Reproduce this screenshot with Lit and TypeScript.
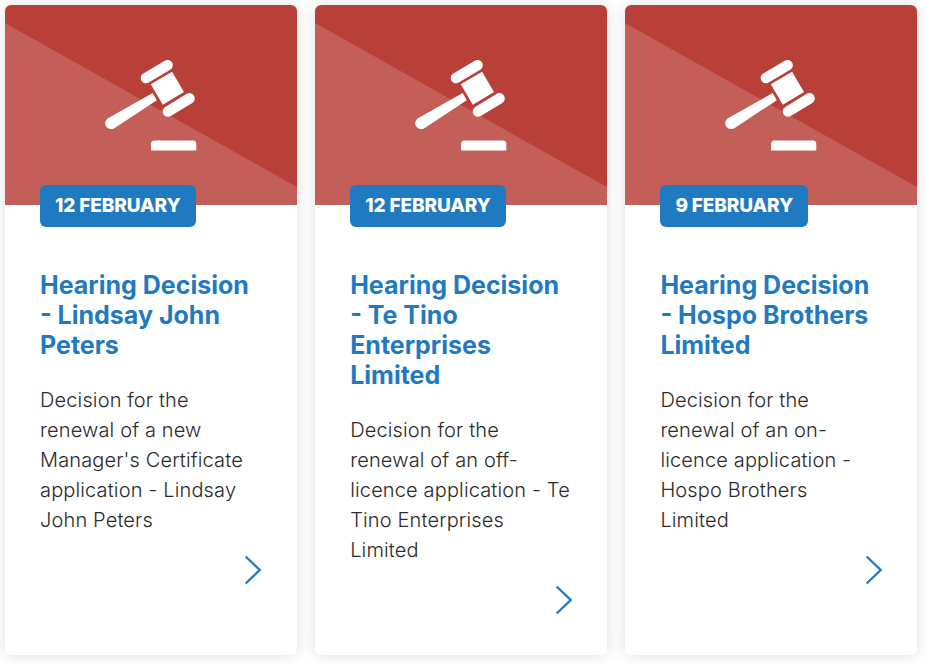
import { LitElement, html, css, svg } from "lit";
import { customElement, property } from "lit/decorators.js";

const gavel = svg`
  <path d="M0 18 L292 182 V200 H0 Z" fill="#c45e58" />
  <g fill="#fff">
    <path d="M147.7 88.1 L151.8 95.2 L109.7 122.9 A5.9 5.9 0 0 1 102.6 113.4 Z" />
    <path d="M145.8 79.3 L167.1 66.8 L179 87.1 L157.8 99.8 Z" />
    <path d="M141 73 L162.5 60.2" stroke="#fff" stroke-width="10.6" stroke-linecap="round" />
    <path d="M163 106.5 L184.5 93.4" stroke="#fff" stroke-width="10.6" stroke-linecap="round" />
    <path d="M146 145.6 V139 Q146 135.4 149.5 135.4 H187.8 Q191.3 135.4 191.3 139 V145.6 Z" />
  </g>
`;

@customElement("decision-card")
export class DecisionCard extends LitElement {
  @property() date = "";
  @property() heading = "";
  @property() summary = "";

  static styles = css`
    :host {
      display: block;
      border-radius: 6px;
      background: #fff;
      box-shadow: 0 0 15px rgba(0, 0, 0, 0.13);
    }
    .picture {
      display: block;
      width: 100%;
      height: 200px;
      border-radius: 6px 6px 0 0;
      background: #b94039;
    }
    .body {
      padding: 0 35px;
    }
    .date {
      position: relative;
      display: block;
      box-sizing: border-box;
      width: fit-content;
      height: 42px;
      margin-top: -20px;
      padding: 0 15px;
      border-radius: 6px;
      background: #1f7ac2;
      color: #fff;
      font-size: 19px;
      font-weight: 780;
      letter-spacing: -0.12px;
      line-height: 42px;
      white-space: nowrap;
    }
    .heading {
      margin: 43px 0 24.5px;
      color: #1f7ac2;
      font-size: 25px;
      font-weight: 700;
      line-height: 30px;
    }
    .summary {
      max-width: 220px;
      margin: 0;
      color: #2b2b2b;
      font-size: 20px;
      font-weight: 320;
      letter-spacing: 0.14px;
      line-height: 30px;
    }
    .arrow {
      display: block;
      width: 18px;
      height: 30px;
      margin: 20px -0.35px 0 auto;
    }
  `;

  render() {
    return html`
      <svg class="picture" viewBox="0 0 292 200" preserveAspectRatio="none">${gavel}</svg>
      <div class="body">
        <span class="date">${this.date}</span>
        <h3 class="heading">${this.heading}</h3>
        <p class="summary">${this.summary}</p>
        <svg class="arrow" viewBox="0 0 18 30" fill="none" stroke="#1f7ac2" stroke-width="2.3">
          <path d="M1.7 1.5 L15.7 15 L1.7 28.5" />
        </svg>
      </div>
    `;
  }
}

@customElement("app-root")
export class AppRoot extends LitElement {
  static styles = css`
    :host {
      display: grid;
      grid-template-columns: repeat(3, 292px);
      gap: 18.2px;
      box-sizing: border-box;
      height: 663px;
      padding: 5px 5px 8px;
      overflow: hidden;
      background: #fff;
      font-family: Inter, "Liberation Sans", sans-serif;
    }
  `;

  private cards = [
    {
      date: "12 FEBRUARY",
      heading: "Hearing Decision - Lindsay John Peters",
      summary: "Decision for the renewal of a new Manager's Certificate application - Lindsay John Peters",
    },
    {
      date: "12 FEBRUARY",
      heading: "Hearing Decision - Te Tino Enterprises Limited",
      summary: "Decision for the renewal of an off-licence application - Te Tino Enterprises Limited",
    },
    {
      date: "9 FEBRUARY",
      heading: "Hearing Decision - Hospo Brothers Limited",
      summary: "Decision for the renewal of an on-licence application - Hospo Brothers Limited",
    },
  ];

  render() {
    return this.cards.map(
      (card) => html`<decision-card .date=${card.date} .heading=${card.heading} .summary=${card.summary}></decision-card>`,
    );
  }
}
